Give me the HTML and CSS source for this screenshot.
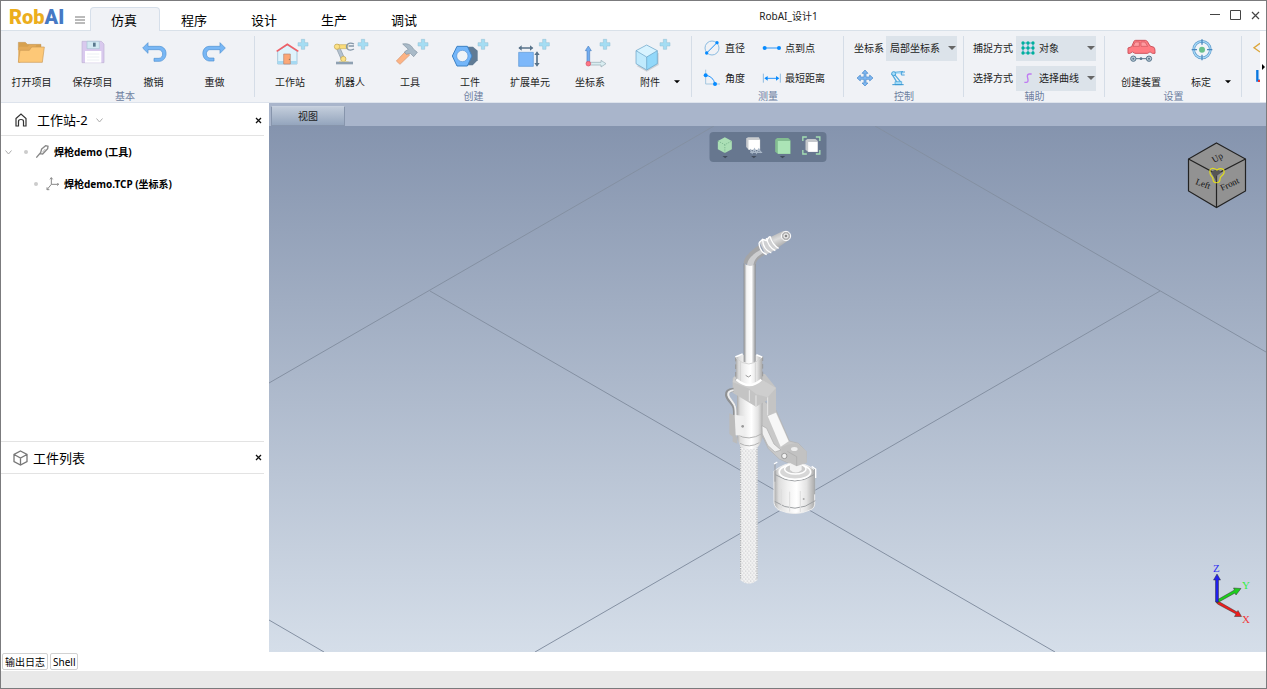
FILE: index.html
```html
<!DOCTYPE html>
<html lang="zh-CN">
<head>
<meta charset="utf-8">
<title>RobAI_设计1</title>
<link rel="stylesheet" href="styles.css">
</head>
<body>
<svg class="defs" width="0" height="0" aria-hidden="true">
  <defs>
    <path id="plus" d="M-5-15H5V-5H15V5H5V15H-5V5H-15V-5H-5Z" fill="#a5ddf3" stroke="#90bdd2" stroke-width="1.5"/>
    <path id="caret" d="M0 0H8L4 4Z"/>
    <path id="cross" d="M1 1L6 6M6 1L1 6" fill="none" stroke="#111" stroke-width="1.3"/>
  </defs>
</svg>
<div class="window">
  <header class="titlebar">
    <div class="logo"><span class="logo-a">Rob</span><span class="logo-b">AI</span></div>
    <button class="plain menu" aria-label="菜单"><svg width="10" height="8" viewBox="0 0 10 8"><path d="M0 1H10M0 4H10M0 7H10" stroke="#777"/></svg></button>
    <nav class="tabs">
      <button class="tab active">仿真</button>
      <button class="tab">程序</button>
      <button class="tab">设计</button>
      <button class="tab">生产</button>
      <button class="tab">调试</button>
    </nav>
    <h1 class="title">RobAI_设计1</h1>
    <div class="wincontrols">
      <button class="plain" aria-label="最小化"><svg width="10" height="10"><path d="M0 4.500H10" stroke="#444"/></svg></button>
      <button class="plain" aria-label="最大化"><svg width="11" height="10"><path d="M.5.5H10.500V9.500H.5Z" fill="none" stroke="#444"/></svg></button>
      <button class="plain" aria-label="关闭"><svg width="9" height="9"><path d="M1 1L8 8M8 1L1 8" stroke="#444" stroke-width="1.200"/></svg></button>
    </div>
  </header>

  <div class="ribbon">
    <section class="group g-basic">
      <div class="tools">
        <button class="tool"><svg width="60" height="30" viewBox="5 114 180 90"><path d="M54 127H75L81 133H122V150H54Z" fill="#d7a14f" stroke="#b08345"/><path d="M54 187V145L59 140H82L88 135H108L103 148L58 188Z" fill="#e3aa58"/><path d="M54 187L59 151H87L94 141H132L126 187Z" fill="#fdc877" stroke="#cc9a55" stroke-width="2"/></svg><span>打开项目</span></button>
        <button class="tool"><svg width="60" height="30" viewBox="188 114 180 90"><path d="M245 124H303L311 132V188H245Z" fill="#d9c9ee" stroke="#c0b2d5" stroke-width="2"/><path d="M260 124H297V146H260Z" fill="#d3e9f2" stroke="#a9c4d4" stroke-width="2"/><path d="M278 128H286V140H278Z" fill="#5a788e"/><path d="M254 153H303V188H254Z" fill="#fff"/><path d="M260 162H297M260 171H297M260 180H297" stroke="#e2e8ef" stroke-width="2"/></svg><span>保存项目</span></button>
        <button class="tool"><svg width="60" height="30" viewBox="371 114 180 90"><path d="M427 144L443 128V139H478C504 141 503 181 478 184H461V175H476C491 173 490 151 476 149H443V160Z" fill="#78b7f5" stroke="#4d8fd0" stroke-width="2"/></svg><span>撤销</span></button>
        <button class="tool"><svg width="60" height="30" viewBox="554 114 180 90"><path d="M675 144L659 128V139H626C601 141 602 180 626 183H641V174H628C615 172 615 151 628 149H659V160Z" fill="#78b7f5" stroke="#4d8fd0" stroke-width="2"/></svg><span>重做</span></button>
      </div>
      <h2>基本</h2>
    </section>

    <section class="group g-create">
      <div class="tools">
        <button class="tool"><svg width="60" height="30" viewBox="15 24 180 90"><path d="M68 64L97 45L126 64V102H68Z" fill="#dff3fc" stroke="#87b3cb" stroke-width="2"/><path d="M68 93H126V102H68Z" fill="#a6d9f2"/><path d="M86 72H106V102H86Z" fill="#fba776" stroke="#b38577" stroke-width="2"/><path d="M65 64L97 43L130 64" fill="none" stroke="#f05f67" stroke-width="5"/><circle cx="103" cy="88" r="1.500" fill="#555"/><use href="#plus" x="144" y="43"/></svg><span>工作站</span></button>
        <button class="tool"><svg width="60" height="30" viewBox="195 24 180 90"><path d="M243 52L252 47L270 88L260 91Z" fill="#b4c2cf" stroke="#8494a3" stroke-width="2"/><path d="M245 44H278V56H245Z" fill="#fbdc78" stroke="#c7ae62" stroke-width="2"/><circle cx="246" cy="50" r="8" fill="#fbe085" stroke="#bfa350" stroke-width="2"/><path d="M297 42C281 34 271 46 276 55C281 63 292 60 297 57M281 48H297" fill="none" stroke="#8496a7" stroke-width="4"/><circle cx="265" cy="87" r="8" fill="#fbe085" stroke="#bfa350" stroke-width="2"/><path d="M252 94H281V101H252Z" fill="#fbdc78"/><path d="M243 95H294V103H243Z" fill="#8fa1b2"/><use href="#plus" x="324" y="43"/></svg><span>机器人</span></button>
        <button class="tool"><svg width="60" height="30" viewBox="375 24 180 90"><path d="M424 93L452 64L464 75L435 103Z" fill="#fdb384" stroke="#d59570" stroke-width="2"/><path d="M443 42C457 39 469 44 475 57L487 67L476 80L466 70L454 73L448 66L460 58Z" fill="#a9bac8" stroke="#7f91a0" stroke-width="2"/><use href="#plus" x="504" y="43"/></svg><span>工具</span></button>
        <button class="tool"><svg width="60" height="30" viewBox="-90 24 180 90"><path d="M-20 50H9L23 62V91L8 106H-20Z" fill="#607b95"/><path d="M-53 78L-39 49H-8L6 78L-8 108H-39Z" fill="#73b6fa" stroke="#3e82c4" stroke-width="3"/><circle cx="-23" cy="78" r="17" fill="#eff3f7" stroke="#5794d4" stroke-width="2"/><use href="#plus" x="39" y="43"/></svg><span>工件</span></button>
        <button class="tool"><svg width="60" height="30" viewBox="90 24 180 90"><path d="M146 67H190V109H146Z" fill="#7db8fa" stroke="#5b95d4" stroke-width="2"/><path d="M148 54H187M201 68V106" stroke="#58738a" stroke-width="5"/><path d="M145 54L155 46V62ZM190 54L180 46V62ZM201 64L193 75H209ZM201 110L193 99H209Z" fill="#58738a"/><use href="#plus" x="223" y="43"/></svg><span>扩展单元</span></button>
        <button class="tool"><svg width="60" height="30" viewBox="270 24 180 90"><path d="M355 48L346 62H351V99H359V62H364Z" fill="#72adf1" stroke="#4d83c2" stroke-width="2"/><path d="M355 97H393V91L408 101L393 111V105H355Z" fill="#d9edf1" stroke="#94abb3" stroke-width="2"/><circle cx="355" cy="101" r="7" fill="#ff7584" stroke="#d45065" stroke-width="2"/><use href="#plus" x="405" y="43"/></svg><span>坐标系</span></button>
        <button class="tool"><svg class="over" width="60" height="30" viewBox="450 24 180 90"><path d="M500 108L530 125L566 105V68Z" fill="#ccd1d7"/><path d="M530 45L562 62V101L530 120L498 101V62Z" fill="#c0eafd"/><path d="M530 45L562 62L530 81L498 62Z" fill="#d8f3ff"/><path d="M530 81L562 62V101L530 120Z" fill="#92d8fa"/><path d="M530 45L562 62V101L530 120L498 101V62ZM498 62L530 81L562 62M530 81V119" fill="none" stroke="#659ec3" stroke-width="2"/><use href="#plus" x="585" y="43"/></svg><span>附件</span><svg class="drop" width="6" height="4" viewBox="0 0 8 5"><use href="#caret"/></svg></button>
      </div>
      <h2>创建</h2>
    </section>

    <section class="group g-measure">
      <div class="measure">
        <button class="mini"><svg width="20" height="20" viewBox="37 113 60 60"><circle cx="67" cy="143" r="21" fill="none" stroke="#8cbce1" stroke-width="3"/><path d="M51 158L82 127" stroke="#1b8df5" stroke-width="3"/><circle cx="51" cy="158" r="5" fill="#078bff"/><circle cx="82" cy="127" r="5" fill="#078bff"/></svg>直径</button>
        <button class="mini"><svg width="20" height="20" viewBox="216 113 60 60"><path d="M224 143H268" stroke="#2f95f5" stroke-width="3"/><circle cx="224" cy="143" r="6" fill="#078bff"/><circle cx="267" cy="143" r="6" fill="#078bff"/></svg>点到点</button>
        <button class="mini"><svg width="20" height="20" viewBox="36 202 60 60"><path d="M47 207V250H90" fill="none" stroke="#a3c6df" stroke-width="3"/><path d="M47 224Q69 226 75 250" fill="none" stroke="#2694fb" stroke-width="3"/><circle cx="47" cy="224" r="6" fill="#078bff"/><circle cx="75" cy="250" r="6" fill="#078bff"/></svg>角度</button>
        <button class="mini"><svg width="20" height="20" viewBox="216 202 60 60"><path d="M220 219V246M271 219V246" stroke="#8dbbe0" stroke-width="3"/><path d="M226 233H264" stroke="#2694fb" stroke-width="3"/><path d="M223 233L233 226V240ZM268 233L258 226V240Z" fill="#078bff"/></svg>最短距离</button>
      </div>
      <h2>测量</h2>
    </section>

    <section class="group g-control">
      <div class="rows">
        <div class="field"><label for="frame">坐标系</label><span class="combo"><select id="frame"><option>局部坐标系</option></select><svg class="arrow" width="8" height="5"><use href="#caret"/></svg></span></div>
        <div class="icons">
          <button class="plain" aria-label="移动"><svg width="20" height="20" viewBox="496 202 60 60"><path d="M526 208L535 218H529V229H540V223L550 232L540 241V236H529V247H535L526 256L517 247H523V236H512V241L502 232L512 223V229H523V218H517Z" fill="#7eb6f0" stroke="#4788c8" stroke-width="2"/></svg></button>
          <button class="plain" aria-label="机器人控制"><svg width="20" height="20" viewBox="595 202 60 60"><path d="M612 218L634 245M616 215L640 213M606 219L622 245" stroke="#55ade0" stroke-width="4"/><path d="M618 218H642" stroke="#b6e2fa" stroke-width="4"/><circle cx="612" cy="219" r="6" fill="#a7defa" stroke="#43a1d8" stroke-width="3"/><path d="M646 214H635V223H645" fill="none" stroke="#46a1dc" stroke-width="3"/><path d="M616 243H636V252H616Z" fill="#a7defa" stroke="#43a1d8" stroke-width="2"/><path d="M608 252H642" stroke="#3596d2" stroke-width="3"/></svg></button>
        </div>
      </div>
      <h2>控制</h2>
    </section>

    <section class="group g-assist">
      <div class="rows">
        <div class="field"><label for="snap">捕捉方式</label><span class="combo"><svg class="lead" width="16" height="16" viewBox="180 118 48 48"><path d="M189 124V160M204 124V160M219 124V160M186 127H222M186 142H222M186 157H222" stroke="#4fa5d3" stroke-width="3"/><g fill="#00b19c"><circle cx="189" cy="127" r="5"/><circle cx="204" cy="127" r="5"/><circle cx="219" cy="127" r="5"/><circle cx="189" cy="142" r="5"/><circle cx="204" cy="142" r="5"/><circle cx="219" cy="142" r="5"/><circle cx="189" cy="157" r="5"/><circle cx="204" cy="157" r="5"/><circle cx="219" cy="157" r="5"/></g></svg><select id="snap" class="iconed"><option>对象</option></select><svg class="arrow" width="8" height="5"><use href="#caret"/></svg></span></div>
        <div class="field"><label for="pick">选择方式</label><span class="combo"><svg class="lead" width="16" height="16" viewBox="180 209 48 48"><path d="M193 246H199Q205 246 204 238L202 228Q202 221 208 221H215" fill="none" stroke="#c07cf2" stroke-width="4"/></svg><select id="pick" class="iconed"><option>选择曲线</option></select><svg class="arrow" width="8" height="5"><use href="#caret"/></svg></span></div>
      </div>
      <h2>辅助</h2>
    </section>

    <section class="group g-setup">
      <div class="tools">
        <button class="tool"><svg width="60" height="30" viewBox="453 114 180 90"><path d="M504 144L515 140L522 124Q523 121 527 121H556Q560 121 563 126L570 138L582 142Q585 145 585 154V160H577Q570 151 563 160H525Q517 151 510 160H504Z" fill="#ff7b82" stroke="#ce555e" stroke-width="3"/><path d="M519 139L526 126H538V139ZM543 139V126H555L563 139Z" fill="#ff9ba0" stroke="#ce555e" stroke-width="2"/><path d="M521 176H566" stroke="#57758b" stroke-width="3"/><circle cx="520" cy="176" r="8" fill="#b9cbd7" stroke="#57758b" stroke-width="3"/><circle cx="567" cy="176" r="8" fill="#b9cbd7" stroke="#57758b" stroke-width="3"/><circle cx="520" cy="176" r="3" fill="#57758b"/><circle cx="567" cy="176" r="3" fill="#57758b"/><circle cx="543" cy="176" r="4" fill="#57758b"/></svg><span>创建装置</span></button>
        <button class="tool"><svg width="60" height="30" viewBox="633 114 180 90"><circle cx="726" cy="149" r="25" fill="#f0f4f8" stroke="#5d9acb" stroke-width="8"/><circle cx="726" cy="149" r="25" fill="none" stroke="#a8daf8" stroke-width="4"/><path d="M726 118V134M726 164V181M695 149H711M741 149H757" stroke="#4988be" stroke-width="4"/><circle cx="726" cy="149" r="9" fill="#69c08c"/></svg><span>标定</span><svg class="drop" width="6" height="4" viewBox="0 0 8 5"><use href="#caret"/></svg></button>
      </div>
      <h2>设置</h2>
    </section>
    <div class="more"><svg width="18" height="60" viewBox="846 111 54 180"><path d="M900 130L882 143L900 156" fill="none" stroke="#dca63b" stroke-width="4"/><path d="M892 210V242H900" fill="none" stroke="#0877df" stroke-width="7"/><path d="M894 243H900" stroke="#e33" stroke-width="6"/></svg></div>
    <button class="plain scroller" aria-label="更多工具"><svg width="3" height="6"><path d="M0 0L3 3L0 6Z"/></svg></button>
  </div>

  <main class="work">
    <aside class="side">
      <section class="pane">
        <div class="pane-head">
          <svg class="home" width="12" height="14" viewBox="0 0 12 14"><path d="M1 5.500L6 1L11 5.500V13H8.500V8.500Q8.500 6.500 6 6.500T3.500 8.500V13H1Z" fill="none" stroke="#333" stroke-width="1.200"/></svg>
          <h3>工作站-2</h3>
          <svg width="7" height="5"><path d="M.5.5L3.500 4L6.500.5" fill="none" stroke="#aaa"/></svg>
          <button class="plain close" aria-label="关闭工作站"><svg width="7" height="7"><use href="#cross"/></svg></button>
        </div>
        <ul class="tree">
          <li>
            <div class="node"><svg width="7" height="5"><path d="M.5.5L3.500 4L6.500.5" fill="none" stroke="#aaa"/></svg><i class="dot"></i><svg width="13" height="14" viewBox="108 136 39 42"><path d="M109 174L121 160M125 148L137 138L144 140L143 147L128 163L121 162Z" fill="none" stroke="#888" stroke-width="4"/><path d="M127 158L136 148" stroke="#aaa" stroke-width="3"/></svg><span>焊枪demo (工具)</span></div>
            <ul>
              <li class="node"><i class="dot"></i><svg width="13" height="14" viewBox="136 230 39 42"><path d="M152 232V252H174M152 252L139 268M148 237L152 232L156 237M170 248L174 252L170 256M139 261V268H146" fill="none" stroke="#888" stroke-width="3"/></svg><span>焊枪demo.TCP (坐标系)</span></li>
            </ul>
          </li>
        </ul>
      </section>
      <section class="pane parts">
        <div class="pane-head">
          <svg width="15" height="16" viewBox="0 0 15 16"><path d="M7.500 1L14 4.500V11.500L7.500 15L1 11.500V4.500ZM1.500 4.700L7.500 8L13.500 4.700M7.500 8V14.500" fill="none" stroke="#777" stroke-width="1.300"/></svg>
          <h3>工件列表</h3>
          <button class="plain close" aria-label="关闭工件列表"><svg width="7" height="7"><use href="#cross"/></svg></button>
        </div>
      </section>
    </aside>

    <section class="view">
      <div class="viewtabs"><button class="viewtab">视图</button></div>
      <div class="canvas">
        <svg class="scene" viewBox="269 126 997 526" preserveAspectRatio="xMidYMid slice" role="img" aria-label="焊枪模型">
          <defs>
            <linearGradient id="tube"><stop offset="0" stop-color="#858789"/><stop offset=".25" stop-color="#f4f4f4"/><stop offset=".65" stop-color="#fff"/><stop offset="1" stop-color="#8c8e91"/></linearGradient>
            <linearGradient id="can"><stop offset="0" stop-color="#aaa"/><stop offset=".12" stop-color="#ddd"/><stop offset=".32" stop-color="#f0f0f0"/><stop offset=".55" stop-color="#fff"/><stop offset=".8" stop-color="#e3e3e3"/><stop offset="1" stop-color="#aaa"/></linearGradient>
            <linearGradient id="nozzle" x1="0" y1="0" x2=".5" y2="1"><stop offset="0" stop-color="#999"/><stop offset=".5" stop-color="#ddd"/><stop offset="1" stop-color="#999"/></linearGradient>
            <pattern id="mesh" width="10" height="12" patternUnits="userSpaceOnUse"><rect width="10" height="12" fill="#f2f2f2"/><circle cx="2" cy="3" r="1.800" fill="#b9bbbe"/><circle cx="7" cy="9" r="1.800" fill="#b9bbbe"/></pattern>
          </defs>
          <path d="M269 383L714 126M269 620L324 652M430 291L1055 652M535 652L1160 291M875 126L1266 352" fill="none" stroke="#8490a2" stroke-width="1"/>
          <g transform="translate(700 360) scale(.33333)">
            <path d="M120 250H173V660Q147 682 120 660Z" fill="url(#mesh)"/>
            <path d="M122 260V660M171 260V660" stroke="#a5a8ac" stroke-width="3" stroke-dasharray="4 3"/>
            <path d="M111 90H190V220Q186 248 173 262Q147 275 125 262Q111 248 111 220Z" fill="url(#can)"/>
            <path d="M111 223Q145 246 188 220M120 250Q147 266 178 248" fill="none" stroke="#b4b4b4" stroke-width="3"/>
            <path d="M187 120L228 150L268 243L295 250L319 275V307L290 320L238 297L205 266L186 226Z" fill="#c9c9c9" stroke="#b0b0b0" stroke-width="2"/>
            <path d="M203 168L228 158L266 244L242 260Z" fill="#f7f7f7"/>
            <path d="M186 197L200 205L222 252L243 270L225 276L203 256L187 222Z" fill="#f0f0f0" stroke="#aaa" stroke-width="2"/>
            <path d="M98 55L108 44L195 42L228 83V155L203 168V120L168 140L98 98Z" fill="#c4c4c4"/>
            <path d="M102 50L150 78L187 60L228 84L203 112L169 103L148 86L98 66Z" fill="#cecece"/>
            <path d="M148 91V124M168 106V139M203 112V166" stroke="#e8e8e8" stroke-width="3"/>
            <path d="M101 89C67 92 84 116 93 126C106 140 105 148 105 169" fill="none" stroke="#8f9193" stroke-width="12"/><path d="M101 91C73 94 87 114 96 124C108 138 107 148 107 169" fill="none" stroke="#eee" stroke-width="6"/>
            <path d="M88 160L108 168V228L112 234V251L98 245V230L88 222Z" fill="#bbb"/><path d="M104 164L134 169V227L107 226Z" fill="#efefef"/><circle cx="128" cy="199" r="4" fill="#999"/>
            <circle cx="253" cy="288" r="8" fill="#eee" stroke="#999" stroke-width="3"/>
            <path d="M222 333Q285 285 344 330V422Q347 445 330 450Q285 471 237 450Q220 440 222 420Z" fill="url(#can)" stroke="#eee" stroke-width="3"/>
            <path d="M224 424Q285 466 346 422M226 344Q285 382 342 344M225 311V365M344 323V403" fill="none" stroke="#9da0a3" stroke-width="3"/>
            <ellipse cx="285" cy="336" rx="47" ry="22" fill="#d7d7d7" stroke="#fff" stroke-width="5"/><ellipse cx="286" cy="327" rx="32" ry="15" fill="#ccc" stroke="#fff" stroke-width="4"/><path d="M270 306H305V330Q287 345 270 330Z" fill="#f2f2f2"/>
            <path d="M244 262L262 254L290 249L320 274V308L290 319L244 296Z" fill="#c2c2c2"/><path d="M262 274L290 290V318" fill="none" stroke="#aaa" stroke-width="2"/><ellipse cx="283" cy="267" rx="10" ry="6" fill="#eee"/><circle cx="253" cy="288" r="8" fill="#f2f2f2" stroke="#999" stroke-width="3"/>
            <path d="M244 388V444M269 395V455M301 393V456" stroke="#ddd" stroke-width="3"/><path d="M222 312L232 306M335 319L347 327V354" stroke="#fff" stroke-width="4" fill="none"/><circle cx="311" cy="417" r="3" fill="#aaa"/>
          </g>
          <g transform="translate(700 220) scale(.33333)">
            <path d="M107 411Q145 395 187 411V480Q148 506 108 480Z" fill="url(#can)"/>
            <path d="M131 130C132 112 144 99 178 74L194 105C172 117 167 124 167 140Z" fill="#a4a5a7"/>
            <path d="M141 140C141 118 156 104 184 88L190 98C168 111 161 122 160 140Z" fill="#cdced0"/>
            <path d="M131 130Q148 145 167 132V425Q148 433 131 425Z" fill="url(#tube)"/>
            <path d="M201 56L248 34Q258 31 268 38L271 53L262 63L220 93Z" fill="url(#nozzle)"/>
            <path d="M178 66L212 48L234 86L197 104Z" fill="#cfd0d2"/>
            <g fill="none" stroke="#fff" stroke-width="4"><path d="M177 68Q178 94 200 104M188 60Q189 88 214 99M200 54Q204 81 226 92M210 49Q217 74 236 85"/><path d="M177 68L188 58L199 62L209 49"/></g>
            <circle cx="258" cy="48" r="14" fill="#b5b5b5" stroke="#fff" stroke-width="3"/><circle cx="258" cy="48" r="6" fill="#888" stroke="#fff" stroke-width="3"/>
            <path d="M106 413Q147 452 187 411M121 426V486M166 429V487" fill="none" stroke="#d4d4d4" stroke-width="3"/>
            <path d="M107 410V481M188 409V471" stroke="#999" stroke-width="3" stroke-dasharray="14 9"/><path d="M109 478Q148 512 184 479" fill="none" stroke="#fff" stroke-width="7"/><path d="M137 466L145 471L153 466" stroke="#999" stroke-width="3" fill="none"/>
            <path d="M106 411L128 402M169 404L187 412" stroke="#fff" stroke-width="5"/>
          </g>
        </svg>
        <div class="viewbar">
          <button class="plain" aria-label="视角"><svg width="28" height="26" viewBox="28 25 84 78"><path d="M71 35L92 46V71L71 82L50 71V46Z" fill="#abdfb5"/><path d="M50 46L71 57L92 46M71 57V81" fill="none" stroke="#6dab83" stroke-width="2" stroke-dasharray="4 3"/><path d="M64 91H80L72 98Z" fill="#414b5b"/></svg></button>
          <button class="plain" aria-label="显示样式"><svg width="28" height="26" viewBox="116 25 84 78"><path d="M136 38L142 35H174L178 42V72H144L136 64Z" fill="#c9cccf"/><path d="M143 43H177V72H143Z" fill="#fff"/><path d="M148 70L154 82L161 70L167 82L174 70L181 82M148 80H184" fill="none" stroke="#a9b7c7" stroke-width="4"/><path d="M151 91H167L159 98Z" fill="#414b5b"/></svg></button>
          <button class="plain" aria-label="实体显示"><svg width="28" height="26" viewBox="205 25 84 78"><path d="M225 42L231 37H264L271 44V85H234L225 78Z" fill="#83bd91"/><path d="M233 46H270V84H233Z" fill="#abe4b6"/><path d="M239 91H255L247 98Z" fill="#414b5b"/></svg></button>
          <button class="plain" aria-label="适应窗口"><svg width="28" height="26" viewBox="292 25 84 78"><path d="M308 46V34H320M347 34H359V46M359 73V85H347M320 85H308V73" fill="none" stroke="#a4dfb3" stroke-width="4"/><path d="M316 44L322 40H346L353 46V79H324L316 72Z" fill="#c5c8cc"/><path d="M324 49H352V78H324Z" fill="#fff"/></svg></button>
        </div>
        <svg class="navcube" width="60" height="68" viewBox="1187 141 60 68"><path d="M1216.500 143L1245.500 159V191L1216.500 207.500L1188.500 191V159Z" fill="#929292" stroke="#222" stroke-width="1.200"/><path d="M1188.500 159L1216.500 174L1245.500 159M1216.500 174V207" fill="none" stroke="#222" stroke-width="1.200"/><path d="M1211 172L1216.500 169L1222 172L1216.500 176V182" fill="#555"/><path d="M1210 173C1209 167 1214 168 1217 170C1220 168 1225 168 1224 173C1223 176 1220 176 1220 179C1220 184 1213 184 1213 179C1213 176 1210 176 1210 173Z" fill="none" stroke="#e1dc20" stroke-width="1.200"/><g class="cubetext"><text x="1195" y="184" transform="rotate(20 1195 184)">Left</text><text x="1222" y="191" transform="rotate(-25 1222 191)">Front</text><text x="1214" y="163" transform="rotate(-30 1214 163)">Up</text></g></svg>
        <svg class="axes" width="44" height="66" viewBox="1210 561 44 66"><g stroke="#333" stroke-width=".5"><path d="M1216 602L1217.500 604L1236 614L1234.500 616.500L1241.500 616.500L1238 610.500L1237 612L1218 601Z" fill="#ee1c1c"/><path d="M1217 603L1235 593L1236 595L1241 588.500L1233.500 588L1234.500 590L1217 600Z" fill="#1ccf1c"/><path d="M1215.500 602V580H1213.500L1217 574L1220.500 580H1218.500V602Z" fill="#2020ed"/></g><g class="axistext"><text x="1213" y="572" fill="#3030f0">Z</text><text x="1242" y="589" fill="#30ef40">Y</text><text x="1242" y="623" fill="#f03838">X</text></g></svg>
      </div>
    </section>
  </main>

  <div class="docktabs"><button>输出日志</button><button>Shell</button></div>
  <footer class="status"></footer>
</div>
</body>
</html>
```
FILE: styles.css
```css
* { box-sizing: border-box; }
body { margin: 0; font: 10px/14px "Noto Sans", "Noto Sans CJK SC", sans-serif; color: #222; }
button, select { font: inherit; color: inherit; }
h1, h2, h3, ul { margin: 0; padding: 0; font-weight: 400; }
svg { display: block; flex: none; }
.defs { position: absolute; }
.plain { border: 0; background: none; padding: 0; }

.window { display: flex; flex-direction: column; height: 100vh; border: 1px solid #7b7b7d; background: #fff; }

/* title bar */
.titlebar { position: relative; display: flex; height: 29px; flex: none; align-items: flex-end; padding-left: 8px; }
.logo { width: 66px; font: 900 20px/26px Roboto, sans-serif; }
.logo-a { color: #ecae1d; }
.logo-b { color: #4679c4; }
.menu { height: 20px; width: 15px; }
.tabs { display: flex; z-index: 1; margin-bottom: -1px; }
.tab { width: 70px; height: 24px; border: 1px solid transparent; border-bottom: 0; border-radius: 4px 4px 0 0; background: none; padding: 0 2px 0 0; font-size: 13px; line-height: 22px; color: #000; }
.tab.active { background: #f0f2f6; border-color: #d6dfea; }
.title { position: absolute; top: 8px; left: 50%; transform: translateX(-50%); margin-left: 155px; font-size: 10px; }
.wincontrols { display: flex; align-items: center; gap: 10px; height: 28px; margin-left: auto; margin-bottom: 1px; padding-right: 6px; }

/* ribbon */
.ribbon { display: flex; height: 73px; flex: none; background: #f0f2f6; border-top: 1px solid #d9e1e9; border-bottom: 1px solid #dde3ec; overflow: hidden; }
.group { display: flex; flex: none; flex-direction: column; justify-content: space-between; position: relative; }
.group::after { content: ""; position: absolute; right: 0; top: 5px; bottom: 5px; width: 1px; background: #d5dde7; }
.group h2 { margin-top: -4px; font-size: 10px; line-height: 12px; text-align: center; color: #6e7f9f; }
.g-basic { width: 254px; }
.g-basic h2 { padding-right: 6px; }
.g-create { width: 437px; }
.g-measure { width: 152px; }
.g-control { width: 120px; }
.g-assist { width: 141px; }
.g-setup { width: 137px; }
.tools { display: flex; padding: 7px 0 0 5px; }
.g-basic .tools { padding-left: 0; }
.g-setup .tools { padding-left: 6px; }
.tool { position: relative; display: flex; flex-direction: column; align-items: center; gap: 7px; width: 60px; border: 0; padding: 0; background: none; white-space: nowrap; }
.tool .over { overflow: visible; }
.g-basic .tool { width: 61px; }
.tool .drop { position: absolute; right: 0; bottom: 5px; }
.measure { display: grid; grid-template-columns: 60px auto; grid-auto-rows: 30px; padding: 2px 0 0 10px; }
.mini { display: flex; align-items: center; gap: 3px; border: 0; padding: 0; background: none; white-space: nowrap; }
.rows { display: grid; grid-auto-rows: 30px; padding: 2px 7px 0 10px; }
.field { display: flex; align-items: center; justify-content: space-between; white-space: nowrap; }
.combo { position: relative; width: 71px; }
.g-assist .combo { width: 80px; }
.g-assist .rows { padding: 2px 9px 0 9px; }
.combo select { display: block; width: 100%; height: 25px; appearance: none; border: 0; border-radius: 0; background: #dce3ea; padding: 0 0 0 4px; }
.combo select.iconed { padding-left: 23px; }
.combo .arrow { position: absolute; right: 1px; top: 10px; fill: #666; }
.combo .lead { position: absolute; left: 4px; top: 4px; }
.icons { display: flex; align-items: center; gap: 13px; padding-left: 1px; }
.more { flex: 1; padding-top: 6px; display: flex; justify-content: flex-end; }
.scroller { width: 8px; background: #fff; padding-left: 2px; }

/* workspace */
.work { display: flex; flex: 1; min-height: 0; }
.side { display: flex; flex-direction: column; width: 268px; padding-right: 5px; flex: none; }
.pane { flex: 339; min-height: 0; }
.parts { flex: 210; border-top: 1px solid #e3e3e3; }
.pane-head { display: flex; align-items: center; height: 33px; border-bottom: 1px solid #e3e3e3; padding: 2px 2px 0 12px; }
.parts .pane-head { height: 32px; padding-top: 0; }
.pane-head h3 { margin: 0 8px 0 5px; font-size: 13px; line-height: 20px; color: #000; }
.home { margin: 0 5px 0 2px; }
.close { margin-left: auto; }
.tree, .tree ul { list-style: none; }
.node { display: flex; align-items: center; height: 32px; padding-left: 4px; font-weight: 700; color: #000; }
.node span { margin-left: 5px; }
.node .dot { width: 4px; height: 4px; border-radius: 50%; background: #ccc; margin: 0 8px 0 12px; }
.tree ul .node { padding-left: 21px; }

.view { display: flex; flex-direction: column; flex: 1; min-width: 0; }
.viewtabs { height: 23px; flex: none; background: #a9b5cb; padding: 3px 0 0 2px; }
.viewtab { display: block; width: 74px; height: 20px; border: 1px solid #8795ac; border-top-color: #c8d1df; padding: 0; background: linear-gradient(#c3cddb, #94a5bd); }
.canvas { position: relative; flex: 1; min-height: 0; background: linear-gradient(#8594ae, #d5dee9); overflow: hidden; }
.scene { position: absolute; width: 100%; height: 100%; }
.viewbar { position: absolute; top: 6px; left: 50%; transform: translateX(-50%); display: flex; gap: 1px; border-radius: 4px; background: #67778f; padding: 2px 1px; }
.navcube { position: absolute; top: 15px; right: 19px; }
.cubetext { font: 9px "Liberation Serif", serif; fill: #111; }
.axes { position: absolute; right: 12px; bottom: 25px; }
.axistext { font: 11px "Liberation Serif", serif; }

.docktabs { display: flex; gap: 2px; height: 19px; flex: none; padding: 1px; }
.docktabs button { height: 17px; border: 1px solid #d2d2d2; border-radius: 2px; background: #fff; padding: 0 2px; color: #000; }
.status { height: 17px; flex: none; background: #e9e9e9; }
```
